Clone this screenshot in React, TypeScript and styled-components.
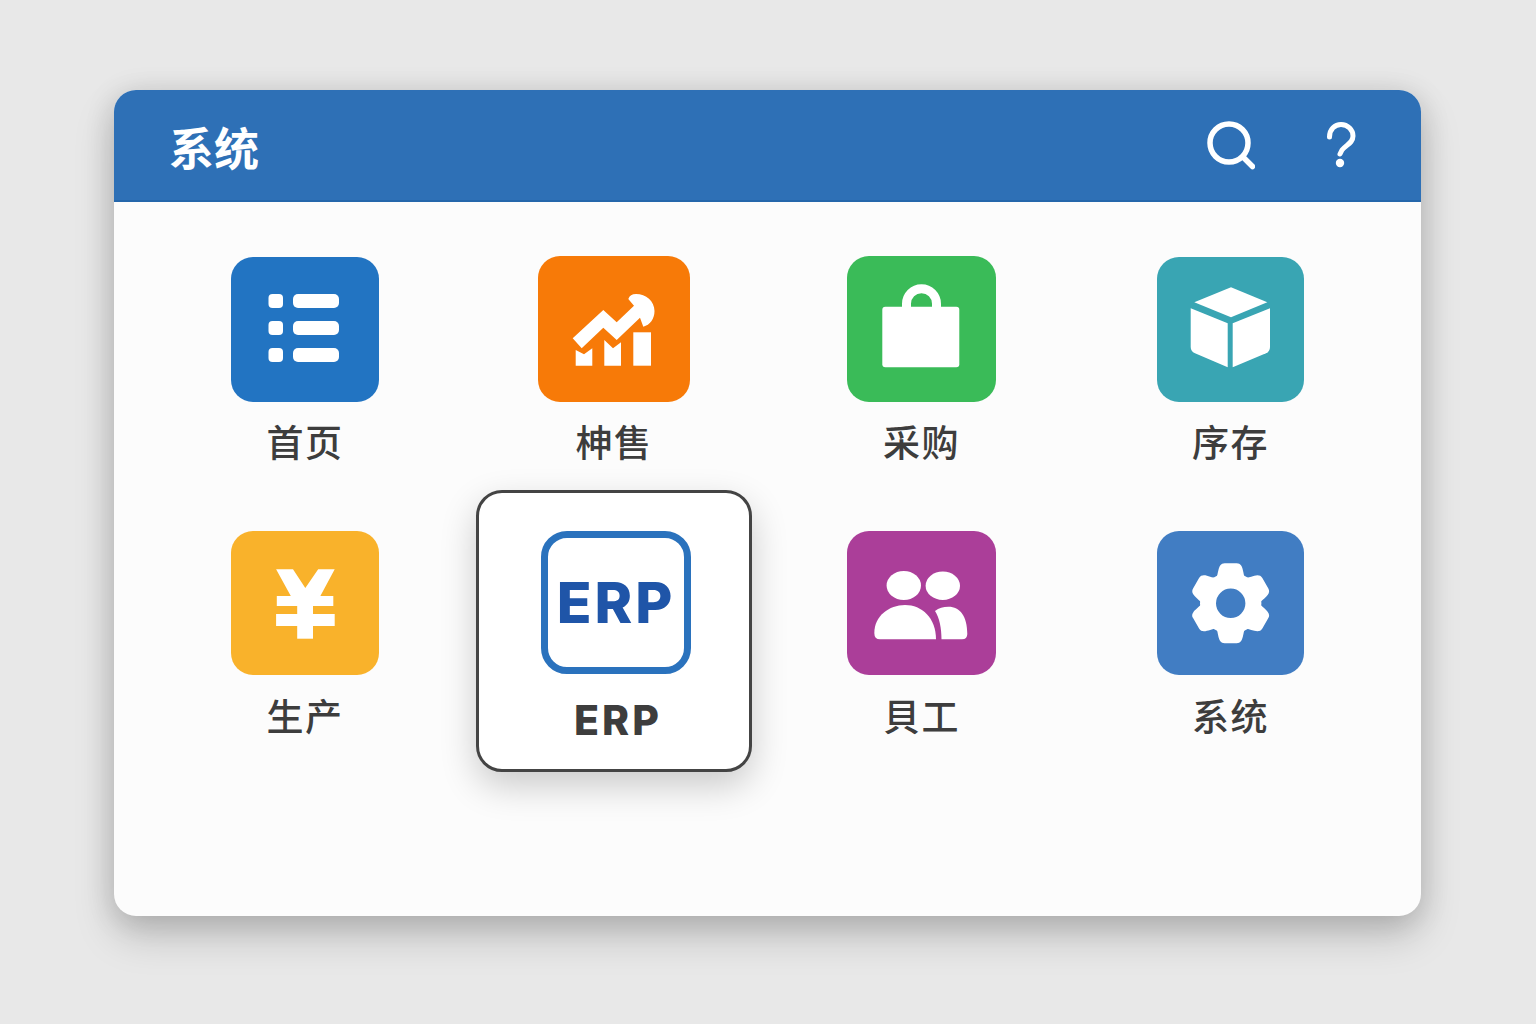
import type { ReactNode } from "react"
import styled, { createGlobalStyle } from "styled-components"

const CJK = `"Noto Sans CJK SC", "Noto Sans", sans-serif`

const GlobalStyle = createGlobalStyle`
  html, body {
    margin: 0;
    background: #e8e8e8;
  }
`

const ListGlyph = () => (
  <Glyph viewBox="0 0 148 145">
    {[37, 64, 91].map((y) => (
      <g key={y}>
        <rect x="37.5" y={y} width="14.5" height="14" rx="4" />
        <rect x="62" y={y} width="46" height="14" rx="5" />
      </g>
    ))}
  </Glyph>
)

const ChartGlyph = () => (
  <Glyph viewBox="0 0 152 146">
    <path d="M37.7 94 L46 98.3 L54.3 92.3 V109.7 H37.7 Z" />
    <path d="M66.3 84 L75 92.3 L83 86.3 V109.7 H66.3 Z" />
    <path d="M95.3 76.3 H113 V109.7 H95.3 Z" />
    <path d="M34.7 82.3 L65.3 54 L78.7 66.3 L96 49.7 L90.3 43 Q92 38 98 38 C108 38 116.5 45 116.5 55 C116.5 63 112 69 105.3 70.7 L102 61.7 L78.7 84 L65.3 71.7 L43.7 92.3 Z" />
  </Glyph>
)

const BagGlyph = () => (
  <Glyph viewBox="0 0 149 146">
    <rect x="35.3" y="50.7" width="77" height="60.6" rx="3" />
    <path
      d="M59.5 52 V47.7 A15 15 0 0 1 89.5 47.7 V52"
      fill="none"
      stroke="#fff"
      strokeWidth="9"
    />
  </Glyph>
)

const CubeGlyph = () => (
  <Glyph viewBox="0 0 147 145">
    <path d="M74 30.3 L110.3 45.3 L74 60.3 L37.3 45.3 Z" />
    <path d="M33.7 51.3 L70.7 66.3 V110.3 L38 96.3 Q33.7 94.5 33.7 90 Z" />
    <path d="M113 51.3 L75.7 66.3 V110.3 L109 96.3 Q113 94.5 113 90 Z" />
  </Glyph>
)

const YenGlyph = () => (
  <Glyph viewBox="0 0 148 144">
    <path d="M45.1 38.3 H62 L74.3 57 L87.2 38.3 H103.7 L88.3 67 H60.9 Z" />
    <rect x="45.8" y="65" width="56.5" height="10" />
    <rect x="45.1" y="83" width="58.6" height="12" />
    <rect x="66.2" y="60" width="15.8" height="47.7" />
  </Glyph>
)

const PeopleGlyph = () => (
  <Glyph viewBox="0 0 149 144">
    <ellipse cx="56.8" cy="54.4" rx="17.2" ry="14.5" />
    <ellipse cx="95.8" cy="54.7" rx="17.2" ry="14.2" />
    <path d="M27.3 102 C27.3 85 42 74 58 74 C75 74 89 87 89 108.3 H33 Q27.3 108.3 27.3 102 Z" />
    <path d="M88 80 C92 77 96 75.7 101.5 75.7 C113 75.7 120.3 85 120.3 103 Q120.3 108.3 115 108.3 H94.5 C94.5 97 92.5 87 88 80 Z" />
  </Glyph>
)

const GearGlyph = () => (
  <Glyph viewBox="0 0 147 144">
    <g transform="translate(73.7 72.3)">
      <circle r="22.7" fill="none" stroke="#fff" strokeWidth="16" />
      {[0, 60, 120, 180, 240, 300].map((deg) => (
        <path
          key={deg}
          transform={`rotate(${deg})`}
          d="M-15.5 -24 C-11.5 -27 -14 -40 -6 -40 H6 C14 -40 11.5 -27 15.5 -24 Z"
        />
      ))}
    </g>
  </Glyph>
)

interface TileData {
  label: string
  color: string
  w: number
  h: number
  nudge?: number
  glyph: ReactNode
}

const TILES: (TileData | "erp")[] = [
  { label: "首页", color: "#2274c2", w: 148, h: 145, glyph: <ListGlyph /> },
  { label: "柛售", color: "#f77a08", w: 152, h: 146, nudge: -1, glyph: <ChartGlyph /> },
  { label: "采购", color: "#3abb58", w: 149, h: 146, nudge: -1, glyph: <BagGlyph /> },
  { label: "序存", color: "#39a5b3", w: 147, h: 145, glyph: <CubeGlyph /> },
  { label: "生产", color: "#f9b22b", w: 148, h: 144, glyph: <YenGlyph /> },
  "erp",
  { label: "貝工", color: "#ab3e99", w: 149, h: 144, glyph: <PeopleGlyph /> },
  { label: "系统", color: "#417dc3", w: 147, h: 144, glyph: <GearGlyph /> },
]

export default function App() {
  return (
    <>
      <GlobalStyle />
      <Page>
        <Card>
          <Header>
            <Title>系统</Title>
            <HeaderIcons>
              <svg width="48" height="50" viewBox="0 0 48 50" fill="none" stroke="#fff" strokeWidth="5.5" strokeLinecap="round">
                <circle cx="22" cy="23" r="19" />
                <path d="M36 37 L45.5 46.5" />
              </svg>
              <svg width="30" height="46" viewBox="0 0 30 46" fill="none" stroke="#fff" strokeWidth="5" strokeLinecap="round">
                <path d="M3.5 15 C3.5 7 9 2.5 15 2.5 C22 2.5 27 8 27 14 C27 21 20 23 16 28 L14 32" />
                <circle cx="14" cy="41" r="4.2" fill="#fff" stroke="none" />
              </svg>
            </HeaderIcons>
          </Header>
          <Grid>
            {TILES.map((tile) =>
              tile === "erp" ? (
                <Tile key="erp" $active>
                  <IconSlot>
                    <ErpIcon>ERP</ErpIcon>
                  </IconSlot>
                  <ErpLabel>ERP</ErpLabel>
                </Tile>
              ) : (
                <Tile key={tile.label}>
                  <IconSlot>
                    <AppIcon $color={tile.color} $w={tile.w} $h={tile.h} $nudge={tile.nudge ?? 0}>
                      {tile.glyph}
                    </AppIcon>
                  </IconSlot>
                  <Label>{tile.label}</Label>
                </Tile>
              ),
            )}
          </Grid>
        </Card>
      </Page>
    </>
  )
}

const Page = styled.div`
  box-sizing: border-box;
  width: 1536px;
  height: 1024px;
  padding: 90px 115px 108px 114px;
  background: #e8e8e8;
  overflow: hidden;
`

const Card = styled.main`
  height: 826px;
  border-radius: 22px;
  background: #fcfcfc;
  overflow: hidden;
  box-shadow:
    0 20px 40px rgba(0, 0, 0, 0.18),
    0 4px 30px rgba(0, 0, 0, 0.14);
`

const Header = styled.header`
  box-sizing: border-box;
  height: 112px;
  display: flex;
  align-items: center;
  justify-content: space-between;
  padding: 0 65px 0 55px;
  background: #2e70b6;
  border-bottom: 2px solid #2567ab;
`

const Title = styled.h1`
  margin: 0;
  padding-top: 4px;
  font-family: ${CJK};
  font-size: 45px;
  line-height: 60px;
  font-weight: 700;
  color: #fff;
`

const HeaderIcons = styled.div`
  display: flex;
  align-items: center;
  gap: 71px;
  margin-bottom: 1px;
`

const Grid = styled.section`
  display: grid;
  grid-template-columns: 310px 308px 307px 311px;
  grid-auto-rows: 274px;
  padding: 14px 0 0 36px;
`

const Tile = styled.div<{ $active?: boolean }>`
  box-sizing: border-box;
  justify-self: center;
  width: 276px;
  height: 282px;
  padding-top: 38px;
  padding-left: ${(p) => (p.$active ? "4px" : "0")};
  display: flex;
  flex-direction: column;
  align-items: center;
  border: 3px solid ${(p) => (p.$active ? "#444" : "transparent")};
  border-radius: 26px;
  background: ${(p) => (p.$active ? "#fff" : "transparent")};
  box-shadow: ${(p) => (p.$active ? "0 14px 36px rgba(0, 0, 0, 0.2)" : "none")};
`

const IconSlot = styled.div`
  height: 146px;
  display: flex;
  align-items: flex-start;
  justify-content: center;
`

const AppIcon = styled.div<{ $color: string; $w: number; $h: number; $nudge: number }>`
  width: ${(p) => p.$w}px;
  height: ${(p) => p.$h}px;
  margin-top: ${(p) => p.$nudge}px;
  border-radius: 22px;
  background: ${(p) => p.$color};
`

const Glyph = styled.svg`
  display: block;
  width: 100%;
  height: 100%;
  fill: #fff;
`

const ErpIcon = styled.div`
  box-sizing: border-box;
  width: 150px;
  height: 143px;
  display: flex;
  align-items: center;
  justify-content: center;
  border: 7px solid #2a72bd;
  border-radius: 26px;
  background: #fff;
  font-family: Inter, sans-serif;
  font-size: 57px;
  font-weight: 800;
  letter-spacing: 3px;
  color: #1f55a8;
`

const Label = styled.div`
  margin-top: 16px;
  font-family: ${CJK};
  font-size: 37px;
  line-height: 44px;
  font-weight: 500;
  letter-spacing: 1.5px;
  color: #3d3d3d;
`

const ErpLabel = styled.div`
  margin: 21px 0 0 4px;
  font-family: Inter, sans-serif;
  font-size: 41px;
  line-height: 44px;
  font-weight: 800;
  letter-spacing: 3px;
  color: #3d3d3d;
`
